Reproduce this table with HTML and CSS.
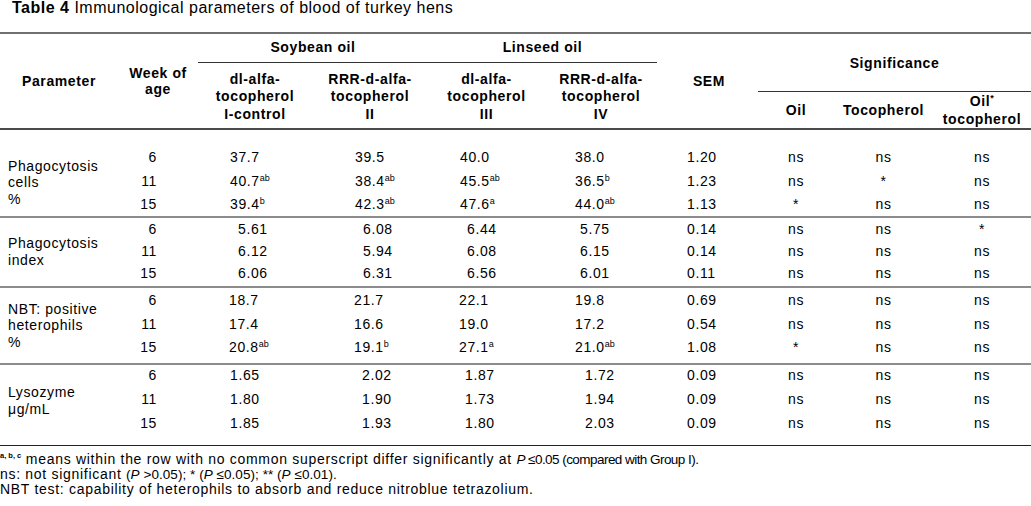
FILE: index.html
```html
<!DOCTYPE html>
<html>
<head>
<meta charset="utf-8">
<link rel="stylesheet" href="styles.css">
</head>
<body>
<p class="title"><b>Table 4</b> Immunological parameters of blood of turkey hens</p>
<div class="tbl">
  <div class="thead">
    <div class="h-param">Parameter</div>
    <div class="h-week">Week of<br>age</div>
    <div class="h-oil h-soy"><span>Soybean oil</span></div>
    <div class="h-oil h-lin"><span>Linseed oil</span></div>
    <div class="h-sub h-c1">dl-alfa-<br>tocopherol<br>I-control</div>
    <div class="h-sub h-c2">RRR-d-alfa-<br>tocopherol<br>II</div>
    <div class="h-sub h-c3">dl-alfa-<br>tocopherol<br>III</div>
    <div class="h-sub h-c4">RRR-d-alfa-<br>tocopherol<br>IV</div>
    <div class="h-sem">SEM</div>
    <div class="h-sig"><span>Significance</span></div>
    <div class="h-s h-s1">Oil</div>
    <div class="h-s h-s2">Tocopherol</div>
    <div class="h-s h-s3">Oil<sup>*</sup><br>tocopherol</div>
  </div>

  <div class="grp g1">
    <div class="lbl">Phagocytosis<br>cells<br>%</div>
    <div class="wk">6</div><div class="v c1">37.7</div><div class="v c2">39.5</div><div class="v c3">40.0</div><div class="v c4">38.0</div><div class="sem">1.20</div><div class="ns">ns</div><div class="ns">ns</div><div class="ns">ns</div>
    <div class="wk">11</div><div class="v c1">40.7<sup>ab</sup></div><div class="v c2">38.4<sup>ab</sup></div><div class="v c3">45.5<sup>ab</sup></div><div class="v c4">36.5<sup>b</sup></div><div class="sem">1.23</div><div class="ns">ns</div><div class="ns">*</div><div class="ns">ns</div>
    <div class="wk">15</div><div class="v c1">39.4<sup>b</sup></div><div class="v c2">42.3<sup>ab</sup></div><div class="v c3">47.6<sup>a</sup></div><div class="v c4">44.0<sup>ab</sup></div><div class="sem">1.13</div><div class="ns">*</div><div class="ns">ns</div><div class="ns">ns</div>
  </div>

  <div class="grp g2">
    <div class="lbl">Phagocytosis<br>index</div>
    <div class="wk">6</div><div class="v c1">5.61</div><div class="v c2">6.08</div><div class="v c3">6.44</div><div class="v c4">5.75</div><div class="sem">0.14</div><div class="ns">ns</div><div class="ns">ns</div><div class="ns">*</div>
    <div class="wk">11</div><div class="v c1">6.12</div><div class="v c2">5.94</div><div class="v c3">6.08</div><div class="v c4">6.15</div><div class="sem">0.14</div><div class="ns">ns</div><div class="ns">ns</div><div class="ns">ns</div>
    <div class="wk">15</div><div class="v c1">6.06</div><div class="v c2">6.31</div><div class="v c3">6.56</div><div class="v c4">6.01</div><div class="sem">0.11</div><div class="ns">ns</div><div class="ns">ns</div><div class="ns">ns</div>
  </div>

  <div class="grp g3">
    <div class="lbl">NBT: positive<br>heterophils<br>%</div>
    <div class="wk">6</div><div class="v c1">18.7</div><div class="v c2">21.7</div><div class="v c3">22.1</div><div class="v c4">19.8</div><div class="sem">0.69</div><div class="ns">ns</div><div class="ns">ns</div><div class="ns">ns</div>
    <div class="wk">11</div><div class="v c1">17.4</div><div class="v c2">16.6</div><div class="v c3">19.0</div><div class="v c4">17.2</div><div class="sem">0.54</div><div class="ns">ns</div><div class="ns">ns</div><div class="ns">ns</div>
    <div class="wk">15</div><div class="v c1">20.8<sup>ab</sup></div><div class="v c2">19.1<sup>b</sup></div><div class="v c3">27.1<sup>a</sup></div><div class="v c4">21.0<sup>ab</sup></div><div class="sem">1.08</div><div class="ns">*</div><div class="ns">ns</div><div class="ns">ns</div>
  </div>

  <div class="grp g4">
    <div class="lbl">Lysozyme<br>μg/mL</div>
    <div class="wk">6</div><div class="v c1">1.65</div><div class="v c2">2.02</div><div class="v c3">1.87</div><div class="v c4">1.72</div><div class="sem">0.09</div><div class="ns">ns</div><div class="ns">ns</div><div class="ns">ns</div>
    <div class="wk">11</div><div class="v c1">1.80</div><div class="v c2">1.90</div><div class="v c3">1.73</div><div class="v c4">1.94</div><div class="sem">0.09</div><div class="ns">ns</div><div class="ns">ns</div><div class="ns">ns</div>
    <div class="wk">15</div><div class="v c1">1.85</div><div class="v c2">1.93</div><div class="v c3">1.80</div><div class="v c4">2.03</div><div class="sem">0.09</div><div class="ns">ns</div><div class="ns">ns</div><div class="ns">ns</div>
  </div>
</div>
<div class="notes">
  <p><sup class="fsup">a, b, c</sup> means within the row with no common superscript differ significantly at <span class="st1"><i>P</i> ≤0.05 (compared with Group I).</span></p>
  <p>ns: not significant <span class="st2">(<i>P</i> &gt;0.05); * (<i>P</i> ≤0.05); ** (<i>P</i> ≤0.01).</span></p>
  <p>NBT test: capability of heterophils to absorb and reduce nitroblue tetrazolium.</p>
</div>
</body>
</html>
```

FILE: styles.css
```css
* {
  box-sizing: border-box;
  margin: 0;
  padding: 0;
}

body {
  margin: 0;
  background: #fff;
  color: #000;
  font-family: "Liberation Sans", Arial, sans-serif;
  font-size: 14px;
  letter-spacing: 0.6px;
  width: 1031px;
}

.title {
  font-size: 16px;
  line-height: 16px;
  letter-spacing: 0.5px;
  padding-left: 12px;
  height: 32px;
}

.tbl {
  width: 1031px;
}

.thead,
.grp {
  display: grid;
  grid-template-columns: 118px 80px 114px 116px 117px 112px 101px 76px 99px 98px;
}

/* ---------- header ---------- */
.thead {
  grid-template-rows: 29px 29px 36px;
  border-top: 2px solid #707070;
  border-bottom: 2px solid #4a4a4a;
  font-weight: bold;
  text-align: center;
}

.h-param {
  grid-column: 1;
  grid-row: 1 / 4;
  align-self: center;
}

.h-week {
  grid-column: 2;
  grid-row: 1 / 4;
  align-self: center;
  line-height: 16px;
}

.h-oil {
  grid-row: 1;
  display: flex;
  align-items: center;
  justify-content: center;
  padding-bottom: 2px;
  border-bottom: 1px solid #333;
}

.h-soy { grid-column: 3 / 5; }
.h-lin { grid-column: 5 / 7; }

.h-sub {
  grid-row: 2 / 4;
  align-self: center;
  line-height: 17.5px;
  padding-top: 3px;
}

.h-c1 { grid-column: 3; }
.h-c2 { grid-column: 4; }
.h-c3 { grid-column: 5; }
.h-c4 { grid-column: 6; }

.h-sem {
  grid-column: 7;
  grid-row: 1 / 4;
  align-self: center;
  padding-left: 3px;
}

.h-sig {
  grid-column: 8 / 11;
  grid-row: 1 / 3;
  display: flex;
  align-items: center;
  justify-content: center;
  border-bottom: 1px solid #333;
}

.h-s {
  grid-row: 3;
  align-self: center;
  line-height: 18px;
}

.h-s1 { grid-column: 8; }
.h-s2 { grid-column: 9; }
.h-s3 { grid-column: 10; }

.h-s3 sup {
  font-size: 9px;
  vertical-align: 5px;
  line-height: 0;
}

/* ---------- body groups ---------- */
.grp {
  grid-template-rows: repeat(3, var(--h));
  padding-top: var(--p);
  border-bottom: 2px solid #8c8c8c;
  line-height: 20px;
  align-items: start;
}

.g1 { --p: 17px; --h: 23.5px; height: 88px; }
.g2 { --p: 1px; --h: 21.75px; height: 70px; }
.g3 { --p: 2px; --h: 23.5px; height: 77px; }
.g4 { --p: 0px; --h: 23.75px; height: 81px; border-bottom: 1px solid #222; }

.lbl {
  grid-column: 1;
  grid-row: 1 / 4;
  align-self: center;
  padding-left: 8px;
  line-height: 16.5px;
}

.wk {
  text-align: right;
  padding-right: 41px;
}

.v { white-space: nowrap; }

.g1 .c1, .g4 .c1 { padding-left: 32px; }
.g2 .c1 { padding-left: 40px; }
.g3 .c1 { padding-left: 31px; }

.g1 .c2 { padding-left: 43px; }
.g2 .c2 { padding-left: 51px; }
.g3 .c2 { padding-left: 42px; }
.g4 .c2 { padding-left: 50px; }

.g1 .c3 { padding-left: 32px; }
.g2 .c3 { padding-left: 39px; }
.g3 .c3 { padding-left: 31px; }
.g4 .c3 { padding-left: 37px; }

.g1 .c4, .g3 .c4 { padding-left: 30px; }
.g2 .c4 { padding-left: 35px; }
.g4 .c4 { padding-left: 40px; }

.sem { padding-left: 30px; }

.ns { text-align: center; }

.v sup {
  font-size: 9px;
  vertical-align: 5px;
  line-height: 0;
  letter-spacing: 0;
}

/* ---------- footnotes ---------- */
.notes {
  padding-top: 6px;
  line-height: 15px;
  letter-spacing: 0.7px;
}

.fsup {
  font-size: 7.5px;
  font-weight: bold;
  vertical-align: 6px;
  line-height: 0;
  letter-spacing: 0;
}

.st1 {
  font-size: 13.5px;
  letter-spacing: -0.55px;
}

.st2 {
  font-size: 13.5px;
  letter-spacing: 0.05px;
}
```
